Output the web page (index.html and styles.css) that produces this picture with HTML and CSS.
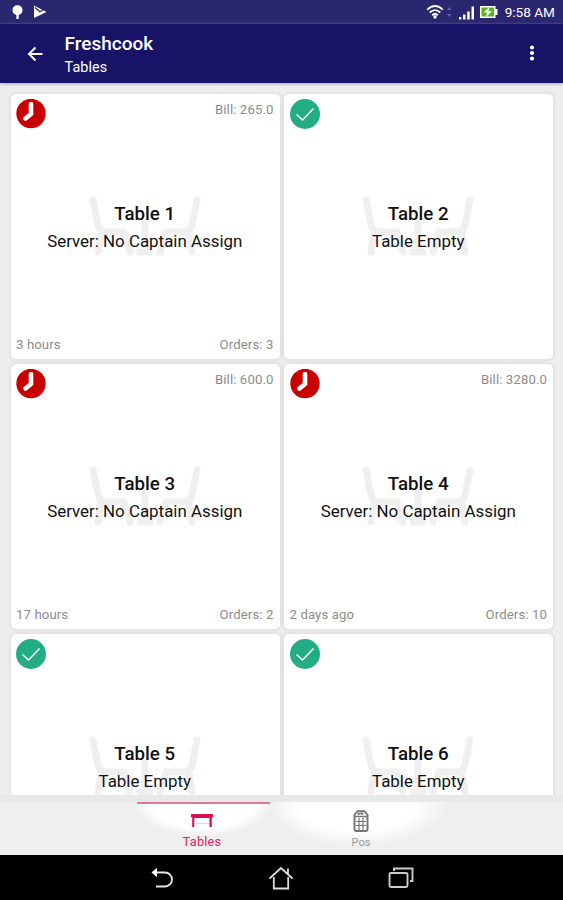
FILE: index.html
```html
<!DOCTYPE html>
<html lang="en">
<head>
<meta charset="utf-8">
<title>Freshcook</title>
<link rel="stylesheet" href="styles.css">
</head>
<body>
<svg class="defs" aria-hidden="true">
  <symbol id="clock" viewBox="0 0 30 30"><circle cx="15" cy="14.500" r="14.700" fill="#c90000"/><path d="M15 5V15L9.500 19.500" fill="none" stroke="#fff" stroke-width="4.600" stroke-linecap="round" stroke-linejoin="miter"/></symbol>
  <symbol id="check" viewBox="0 0 30 30"><circle cx="15" cy="15" r="15" fill="#22ad84"/><path d="M6.500 15.500l6 5.500L23.500 9.500" fill="none" stroke="#fff" stroke-width="1.500"/></symbol>
  <symbol id="seats" viewBox="0 0 112 60"><g fill="none" stroke="#efefef" stroke-width="7" stroke-linecap="round" stroke-linejoin="round"><path d="M4 4L9 29Q11 36 17 36H35M12 37L9 56M35 36L41 56M108 4L103 29Q101 36 95 36H77M100 37L103 56M77 36L71 56M56 27V55M51 56H61"/></g></symbol>
</svg>
<header class="status">
  <svg class="notices" width="38" height="18" viewBox="0 0 38 18" fill="#fff"><path d="M1.500 7a5 4.800 0 0 1 10 0Q11.500 10.800 7.700 12V16H5.400V12Q1.500 10.800 1.500 7zM23 2.500L35.500 9 23 15z"/><path d="M24 4.500l5 4.200 5-3.500" fill="none" stroke="#29266f" stroke-width="1.300"/></svg>
  <div class="system">
    <svg width="74" height="18" viewBox="0 0 74 18"><g fill="none" stroke="#fff" stroke-width="1.800"><path d="M1.200 6.600Q9 -.5 16.800 6.600M3.700 9.500Q9 4.700 14.300 9.500M6.200 12.200Q9 9.800 11.800 12.200"/></g><circle cx="9" cy="14" r="1.700" fill="#fff"/><path d="M21 7l2.300-3 2.300 3zM21 11h4.600l-2.300 3z" fill="#6865a0"/><path d="M33 14h2.300v2.500H33zM37 11.500h2.500v5H37zM41.200 8.500h2.500v8h-2.500zM45.500 3.500H48v13h-2.500z" fill="#fff"/><path d="M54 3h15.500v3H71.500v6H69.500v3H54z" fill="#fff"/><path d="M55.500 4.500H68v9H55.500z" fill="#56b51e"/><path d="M63.500 4L57.500 9.500H61L60 14l6-5.800H62.500z" fill="#fff"/></svg>
    <span class="time">9:58 AM</span>
  </div>
</header>
<div class="appbar">
  <svg class="back" width="16" height="16" viewBox="0 0 16 16" fill="none" stroke="#fff" stroke-width="2"><path d="M15.500 8H2M8.500 1.500L2 8l6.500 6.500"/></svg>
  <div class="titles"><h1>Freshcook</h1><p>Tables</p></div>
  <svg class="more" width="6" height="16" viewBox="0 0 6 16" fill="#fff"><circle cx="3" cy="2.500" r="2.100"/><circle cx="3" cy="8" r="2.100"/><circle cx="3" cy="13.500" r="2.100"/></svg>
</div>
<main class="grid">
  <article class="card">
    <div class="row"><svg class="state"><use href="#clock"/></svg><span>Bill: 265.0</span></div>
    <div class="middle"><svg class="seats"><use href="#seats"/></svg><h2>Table 1</h2><p>Server: No Captain Assign</p></div>
    <div class="row foot"><span>3 hours</span><span>Orders: 3</span></div>
  </article>
  <article class="card">
    <div class="row"><svg class="state"><use href="#check"/></svg></div>
    <div class="middle"><svg class="seats"><use href="#seats"/></svg><h2>Table 2</h2><p>Table Empty</p></div>
  </article>
  <article class="card">
    <div class="row"><svg class="state"><use href="#clock"/></svg><span>Bill: 600.0</span></div>
    <div class="middle"><svg class="seats"><use href="#seats"/></svg><h2>Table 3</h2><p>Server: No Captain Assign</p></div>
    <div class="row foot"><span>17 hours</span><span>Orders: 2</span></div>
  </article>
  <article class="card">
    <div class="row"><svg class="state"><use href="#clock"/></svg><span>Bill: 3280.0</span></div>
    <div class="middle"><svg class="seats"><use href="#seats"/></svg><h2>Table 4</h2><p>Server: No Captain Assign</p></div>
    <div class="row foot"><span>2 days ago</span><span>Orders: 10</span></div>
  </article>
  <article class="card">
    <div class="row"><svg class="state"><use href="#check"/></svg></div>
    <div class="middle"><svg class="seats"><use href="#seats"/></svg><h2>Table 5</h2><p>Table Empty</p></div>
  </article>
  <article class="card">
    <div class="row"><svg class="state"><use href="#check"/></svg></div>
    <div class="middle"><svg class="seats"><use href="#seats"/></svg><h2>Table 6</h2><p>Table Empty</p></div>
  </article>
</main>
<nav class="tabs">
  <div class="tab active">
    <svg width="22" height="22" viewBox="0 0 22 22" fill="#dc0d50"><path d="M0 5h22v3.200h-1.200V18h-2.300V9H3.300v9H1.200V8.200H0z"/><path d="M3.300 14h15.200v1H3.300z" opacity=".2"/></svg>
    <span>Tables</span>
  </div>
  <div class="tab pos">
    <svg width="16" height="22" viewBox="0 0 16 22" fill="none" stroke="#777"><path d="M1.500 5L4.500 1.200h7L14.500 5v14q0 2-2 2h-9q-2 0-2-2z" stroke-width="2"/><path d="M5.500 5V3.500h4V5M2 6.500h12" stroke-width="1.500"/><path d="M3 11.500h10M3 15.500h10M6 8v12M10 8v12" stroke-width="1.200"/></svg>
    <span>Pos</span>
  </div>
</nav>
<footer class="navbar">
  <svg width="24" height="22" viewBox="0 0 24 22"><path d="M4 5.500H15a7 7 0 0 1 0 14H6" fill="none" stroke="#e6e6e6" stroke-width="1.800"/><path d="M1.500 5.500L7 .8v9.400z" fill="#fff"/></svg>
  <svg width="26" height="24" viewBox="0 0 26 24" fill="none" stroke="#ddd" stroke-width="1.800"><path d="M1.500 12.500L13 2l11.500 10.500M20 8V2.500M5.800 11v11.500h14.400V11"/></svg>
  <svg width="26" height="22" viewBox="0 0 26 22" fill="none" stroke="#ccc" stroke-width="1.900"><rect x="1.500" y="6" width="18" height="14" rx="1.500"/><path d="M6 4V1.500h18.500V14H22"/></svg>
</footer>
</body>
</html>
```

FILE: styles.css
```css
* { box-sizing: border-box; }
body {
  margin: 0;
  width: 563px;
  height: 900px;
  overflow: hidden;
  display: flex;
  flex-direction: column;
  background: #eee;
  font-family: Roboto, sans-serif;
}
h1, h2, p { margin: 0; }
.defs { position: absolute; width: 0; height: 0; }

.status {
  flex: 0 0 24px;
  display: flex;
  justify-content: space-between;
  padding: 3px 8px 0 11px;
  background: #2a2770;
  color: #fff;
}
.system { display: flex; gap: 5px; }
.time { font-size: 13.6px; line-height: 19px; white-space: nowrap; }

.appbar {
  flex: 0 0 59px;
  display: flex;
  align-items: flex-start;
  padding: 8px 28px 0 27px;
  background: #171366;
  color: #fff;
  box-shadow: 0 1px 3px #aaa;
}
.back { margin-top: 14px; }
.titles { flex: 1; margin-left: 21.5px; }
.titles h1 { font-size: 19px; line-height: 24px; font-weight: 500; }
.titles p { font-size: 14.4px; line-height: 24px; letter-spacing: 0.1px; }
.more { margin-top: 13px; }

.grid {
  flex: 0 0 712px;
  overflow: hidden;
  display: grid;
  grid-template-columns: 269px 269px;
  grid-auto-rows: 265px;
  gap: 5px 4.5px;
  padding: 11px 10.5px 0;
}
.card {
  display: flex;
  flex-direction: column;
  justify-content: space-between;
  padding: 5px 6px 5px 5.5px;
  background: #fff;
  border-radius: 5px;
  box-shadow: 0 0 2px 2px #e2e2e2;
}
.row {
  height: 30px;
  display: flex;
  justify-content: space-between;
  color: #8c8c8c;
  font-size: 13.2px;
  line-height: 21px;
  letter-spacing: 0.1px;
}
.foot { height: 18px; line-height: 18px; }
.state { width: 30px; height: 30px; }
.middle {
  position: relative;
  flex: 1;
  padding-top: 72px;
  text-align: center;
  color: #111;
}
.seats {
  position: absolute;
  left: 50%;
  top: 67px;
  width: 112px;
  height: 60px;
  margin-left: -56px;
}
.middle h2 {
  position: relative;
  font-size: 18.7px;
  line-height: 26px;
  font-weight: 500;
}
.middle p {
  position: relative;
  margin-top: 2px;
  font-size: 16.9px;
  line-height: 24px;
}

.tabs {
  flex: 0 0 60px;
  display: flex;
  padding-left: 137px;
  border-top: 7px solid #e8e8e8;
  background: #efefef;
}
.tab {
  display: flex;
  flex-direction: column;
  align-items: center;
  line-height: 15px;
}
.tab.active {
  width: 133px;
  padding: 5px 3px 0 0;
  border-top: 2px solid #dd7892;
  background: radial-gradient(ellipse 68px 32px at 50% 0, #fff 75%, #efefef 100%);
  color: #dc2560;
  font-size: 12.8px;
  letter-spacing: 0.2px;
}
.tab.active span { margin-top: 3px; }
.tab.pos {
  width: 182px;
  padding-top: 8px;
  background: radial-gradient(ellipse 90px 45px at 48% 0, #fff 65%, #efefef 100%);
  color: #999;
  font-size: 11px;
}
.tab.pos span { margin-top: 3px; }

.navbar {
  flex: 0 0 45px;
  display: flex;
  justify-content: center;
  align-items: center;
  gap: 94px;
  padding: 1px 0 0 1px;
  background: #000;
}
```
